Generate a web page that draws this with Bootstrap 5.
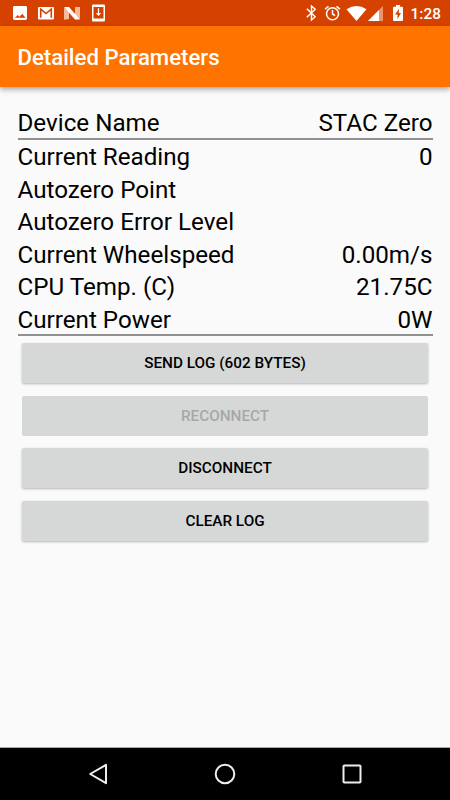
<!DOCTYPE html>
<html lang="en">
<head>
<meta charset="utf-8">
<meta name="viewport" content="width=device-width, initial-scale=1">
<title>Detailed Parameters</title>
<link href="https://cdn.jsdelivr.net/npm/bootstrap@5.3.0/dist/css/bootstrap.min.css" rel="stylesheet">
<style>
  body { font-family: Roboto, "Liberation Sans", sans-serif; background: #fafafa; color: #000; height: 800px; }
  svg { display: block; flex: none; }
  .status-bar { height: 26px; background: #d54200; color: #fff; padding: 0 9px 0 12px; }
  .status-left { gap: 10px; }
  .icon-download { margin-left: 2px; }
  .icon-alarm { margin-left: 7px; margin-right: 5px; }
  .icon-battery { margin-left: 6px; margin-right: 6px; }
  .clock { font-size: 15.3px; font-weight: 500; line-height: 24px; letter-spacing: .1px; padding-top: 2px; }
  .app-bar { height: 61px; background: #ff7300; padding: 2px 17.5px 0; box-shadow: 0 2px 5px rgba(0,0,0,.28), 0 4px 6px rgba(0,0,0,.08); }
  .app-title { font-size: 22.2px; font-weight: 500; line-height: 1; color: #fff; }
  .params { padding: 19.5px 17.5px 0; font-size: 24.2px; line-height: 32.5px; }
  .param { height: 32.5px; }
  .param-group { border-bottom: 2px solid #909090; }
  .group-head { height: 33px; }
  .group-body { height: 196.5px; padding-top: 1.6px; }
  .actions { padding: 7px 22px 0; gap: 12.5px; }
  .btn-raised { --bs-btn-bg: #d6d8d7; --bs-btn-color: #000; --bs-btn-disabled-bg: #d6d8d7; --bs-btn-disabled-color: #a6a8a7; --bs-btn-disabled-opacity: 1; --bs-btn-border-radius: 2px; --bs-btn-border-width: 0; --bs-btn-font-size: 15.3px; --bs-btn-font-weight: 500; height: 40px; padding: 0; line-height: 41px; box-shadow: 0 1px 2.5px rgba(0,0,0,.28); }
  .btn-raised:disabled { box-shadow: none; }
  .nav-keys { height: 53px; background: #000; border-top: 1px solid #aaa; padding: 0 88px; }
</style>
</head>
<body class="d-flex flex-column overflow-hidden">
<div class="status-bar d-flex align-items-center justify-content-between">
  <div class="status-left d-flex align-items-center">
    <svg width="16" height="18" viewBox="0 0 16 18"><path fill="#fff" fill-rule="evenodd" d="M2.400 2h11.200A1.400 1.400 0 0 1 15 3.400v11.200a1.400 1.400 0 0 1-1.400 1.400H2.400A1.400 1.400 0 0 1 1 14.600V3.400A1.400 1.400 0 0 1 2.400 2zM3 13.800h10.500l-3.300-4.100-2.600 3-1.900-1.800z"/></svg>
    <svg width="16" height="18" viewBox="0 0 16 18"><rect y="3" width="16" height="12.500" rx="1.200" fill="#fff"/><path d="M2.700 13.800V5.200L8 9.500l5.300-4.300v8.600" fill="none" stroke="#d54200" stroke-width="1.600"/></svg>
    <svg width="16" height="18" viewBox="0 0 16 18"><path fill="#f8b99c" d="M0 3.500L5 8v7l-5 .8zM11 3h5v12l-5-4z"/><path fill="#fff" d="M0 3h5l11 12.500h-5z"/></svg>
    <svg class="icon-download" width="13" height="18" viewBox="0 0 13 18"><path fill="#fff" fill-rule="evenodd" d="M1.200.5h10.600q1.200 0 1.200 1.200v14.600q0 1.200-1.200 1.200H1.200Q0 17.500 0 16.300V1.700Q0 .5 1.200.5zM1.500 3v11.500h10V3z"/><path d="M6.500 4.200v7M4.500 9.200l2 2 2-2" fill="none" stroke="#fff" stroke-width="1.200"/></svg>
  </div>
  <div class="d-flex align-items-center">
    <svg width="11" height="18" viewBox="0 0 11 18"><path d="M.8 4.800l8.400 8L5.500 16V2l3.700 3.200-8.400 8" fill="none" stroke="#fff" stroke-width="1.400"/></svg>
    <svg class="icon-alarm" width="17" height="18" viewBox="0 0 17 18"><g fill="none" stroke="#fff" stroke-width="1.500"><circle cx="8.500" cy="9.700" r="6"/><path d="M1 5.200l3.500-2.900M16 5.200l-3.500-2.900M8.500 6v4l2.600 1.700"/></g></svg>
    <svg width="40" height="18" viewBox="0 0 40 18"><path fill="#fff" d="M.5 5.300Q10.500-1.200 20.500 5.300L10.500 17z"/><path fill="#ef936d" d="M37 2v15H22z"/><path fill="#fff" d="M33 6v11H22z"/></svg>
    <svg class="icon-battery" width="12" height="18" viewBox="0 0 12 18"><path fill="#fff" d="M4 1h4v1.700h2q1 0 1 1v12.300q0 1-1 1H2q-1 0-1-1V3.700q0-1 1-1h2z"/><path fill="#d54200" d="M7 4.800L3 10.600h2.500V15L9 9H6.700z"/></svg>
    <span class="clock">1:28</span>
  </div>
</div>
<header class="app-bar d-flex align-items-center"><h1 class="app-title m-0">Detailed Parameters</h1></header>
<main class="flex-grow-1">
  <section class="params">
    <div class="param-group group-head">
      <div class="param d-flex justify-content-between"><span>Device Name</span><span>STAC Zero</span></div>
    </div>
    <div class="param-group group-body">
      <div class="param d-flex justify-content-between"><span>Current Reading</span><span>0</span></div>
      <div class="param d-flex justify-content-between"><span>Autozero Point</span></div>
      <div class="param d-flex justify-content-between"><span>Autozero Error Level</span></div>
      <div class="param d-flex justify-content-between"><span>Current Wheelspeed</span><span>0.00m/s</span></div>
      <div class="param d-flex justify-content-between"><span>CPU Temp. (C)</span><span>21.75C</span></div>
      <div class="param d-flex justify-content-between"><span>Current Power</span><span>0W</span></div>
    </div>
  </section>
  <section class="actions d-flex flex-column">
    <button class="btn btn-raised text-uppercase" type="button">Send log (602 bytes)</button>
    <button class="btn btn-raised text-uppercase" type="button" disabled>Reconnect</button>
    <button class="btn btn-raised text-uppercase" type="button">Disconnect</button>
    <button class="btn btn-raised text-uppercase" type="button">Clear log</button>
  </section>
</main>
<footer class="nav-keys d-flex align-items-center justify-content-between">
  <svg width="20" height="22" viewBox="0 0 20 22"><path d="M18 1.800v18.400L2.200 11z" fill="none" stroke="#eee" stroke-width="2" stroke-linejoin="round"/></svg>
  <svg width="22" height="22" viewBox="0 0 22 22"><circle cx="11" cy="11" r="9.300" fill="none" stroke="#eee" stroke-width="2"/></svg>
  <svg width="20" height="22" viewBox="0 0 20 22"><rect x="1.500" y="2.500" width="17" height="17" rx=".8" fill="none" stroke="#eee" stroke-width="2"/></svg>
</footer>
<script src="https://cdn.jsdelivr.net/npm/bootstrap@5.3.0/dist/js/bootstrap.bundle.min.js"></script>
</body>
</html>
